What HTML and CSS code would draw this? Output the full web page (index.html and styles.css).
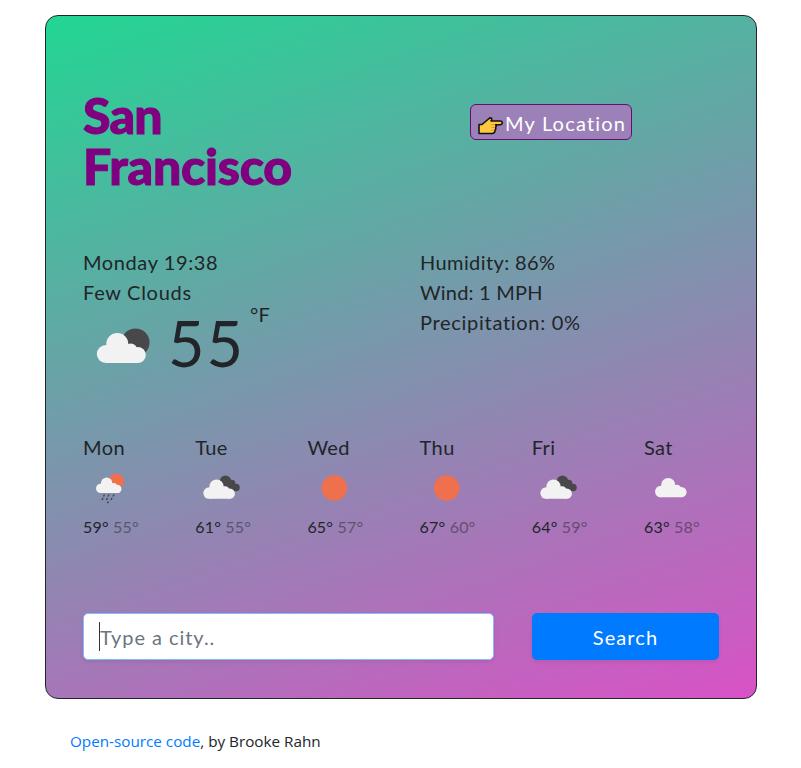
FILE: index.html
```html
<!DOCTYPE html>
<html lang="en">
<head>
<meta charset="utf-8">
<title>Weather</title>
<link rel="stylesheet" href="styles.css">
</head>
<body>
<svg class="defs" width="0" height="0">
  <defs>
    <g id="cloud"><circle cx="9" cy="21" r="9"/><circle cx="20.500" cy="11" r="11"/><circle cx="34" cy="17" r="6.500"/><circle cx="41" cy="22" r="8"/><path d="M9 14L20 9L34 13L41 22V30H9Z"/></g>
    <g id="back"><circle cx="30.500" cy="19" r="5.600"/><circle cx="36.700" cy="21.500" r="3.700"/><circle cx="41" cy="25.500" r="3.800"/><path d="M26 20H37L43 29H35Z"/></g>
  </defs>
</svg>
<main class="card">
  <header class="top">
    <h1 class="city"><span class="san">San</span><br>Francisco</h1>
    <button class="location" type="button">
      <svg width="26" height="20" viewBox="0 0 26 20"><path d="M1 9.500H4L10.500 4Q12.500 2.300 13.500 3.300Q14.300 4.500 13 6H22.500Q24.300 6.200 24.300 7.800Q24.300 9.400 22.500 9.700H17.500Q19 11 17.500 12.500Q18.500 14 17 15.200Q17.300 18 14.500 18.500H1Z" fill="#ffc83d" stroke="#111" stroke-width="1.600" stroke-linejoin="round"/><path d="M13 9.700H17M13.500 12.500H17M13 15.300H16.500" stroke="#e59a20" stroke-width="1" fill="none"/></svg><span>My Location</span>
    </button>
  </header>
  <section class="now">
    <div>
      <div class="line l-day">Monday 19:38</div>
      <div class="line l-few">Few Clouds</div>
      <div class="temp">
        <svg class="now-icon" width="55" height="37" viewBox="0 0 55 37"><circle cx="40.500" cy="14.500" r="14" fill="#48484a"/><use href="#cloud" transform="translate(1.800 5)" fill="#f2f2f2"/></svg>
        <span class="degrees">55</span><span class="unit">°F</span>
      </div>
    </div>
    <div>
      <div class="line">Humidity: 86%</div>
      <div class="line l-wind">Wind: 1 MPH</div>
      <div class="line l-rain">Precipitation: 0%</div>
    </div>
  </section>
  <section class="forecast">
    <div class="day"><div class="line">Mon</div>
      <svg width="56" height="50" viewBox="0 0 56 50"><circle cx="33.500" cy="19" r="7.500" fill="#ee704d"/><use href="#cloud" transform="translate(13 15.500) scale(.52)" fill="#f2f2f2"/><path d="M20.500 34.500l1-2M25 34.500l1-2M30 34.500l1-2M19 38l1-2M23.500 38l1-2M28 38l1-2M24.500 41l1-1.500" stroke="#48484a" stroke-width="1.500"/></svg>
      <div class="range">59° <span>55°</span></div></div>
    <div class="day"><div class="line">Tue</div>
      <svg width="56" height="50" viewBox="0 0 56 50"><use href="#back" fill="#48484a"/><use href="#cloud" transform="translate(8.300 17.500) scale(.645)" fill="#f2f2f2"/></svg>
      <div class="range">61° <span>55°</span></div></div>
    <div class="day"><div class="line">Wed</div>
      <svg width="56" height="50" viewBox="0 0 56 50"><circle cx="27.300" cy="26" r="12.800" fill="#ee704d"/></svg>
      <div class="range">65° <span>57°</span></div></div>
    <div class="day"><div class="line">Thu</div>
      <svg width="56" height="50" viewBox="0 0 56 50"><circle cx="26.600" cy="26" r="12.800" fill="#ee704d"/></svg>
      <div class="range">67° <span>60°</span></div></div>
    <div class="day"><div class="line">Fri</div>
      <svg width="56" height="50" viewBox="0 0 56 50"><use href="#back" fill="#48484a"/><use href="#cloud" transform="translate(8.300 17.500) scale(.645)" fill="#f2f2f2"/></svg>
      <div class="range">64° <span>59°</span></div></div>
    <div class="day"><div class="line">Sat</div>
      <svg width="56" height="50" viewBox="0 0 56 50"><use href="#cloud" transform="translate(11 16) scale(.645)" fill="#f2f2f2"/></svg>
      <div class="range">63° <span>58°</span></div></div>
  </section>
  <form class="search">
    <div class="field"><i class="caret"></i><span>Type a city..</span></div>
    <button class="submit" type="button">Search</button>
  </form>
</main>
<footer class="credit"><a>Open-source code</a>, by Brooke Rahn</footer>
</body>
</html>
```

FILE: styles.css
```css
* { box-sizing: border-box; }
body {
  margin: 0;
  padding: 15px 44px 0 45px;
  background: #fff;
  color: #212529;
  font-family: Lato, sans-serif;
  font-size: 20px;
  line-height: 30px;
}
svg { display: block; }
.defs { position: absolute; }
.card {
  height: 684px;
  padding: 74px 37px 0;
  border: 1px solid #212529;
  border-radius: 13px;
  background: linear-gradient(160deg, #22d693, #d952c6);
}
.top { display: flex; height: 157px; }
.city {
  width: 387px;
  margin: 0;
  color: purple;
  font-size: 50px;
  line-height: 51px;
  font-weight: 900;
  letter-spacing: -0.2px;
  -webkit-text-stroke: 1px purple;
}
.san { letter-spacing: -0.8px; }
.location {
  display: flex;
  align-items: center;
  width: 162px;
  height: 36px;
  margin-top: 14px;
  padding: 2px 0 0 7px;
  border: 1px solid #6b0a70;
  border-radius: 6px;
  background: #9b81b7;
  color: #fff;
  font: 20px/30px Lato, sans-serif;
  letter-spacing: 1.2px;
  white-space: nowrap;
}
.location svg { margin: 4px 1px 0 0; }
.location span { margin-top: -1px; }
.now {
  display: grid;
  grid-template-columns: 337px 1fr;
  height: 185px;
}
.line { letter-spacing: .4px; white-space: nowrap; }
.l-day { letter-spacing: .6px; }
.l-few { letter-spacing: .7px; }
.l-wind { letter-spacing: .2px; }
.l-rain { letter-spacing: .7px; }
.temp { display: flex; height: 70px; }
.now-icon { margin: 21px 0 0 12px; }
.degrees {
  margin-left: 18px;
  font-size: 63px;
  line-height: 71px;
  letter-spacing: 2px;
}
.unit { margin: -8px 0 0 5px; }
.forecast { display: grid; grid-template-columns: repeat(6, 112.200px); height: 181px; }
.range { font-size: 16px; line-height: 30px; letter-spacing: .2px; white-space: nowrap; }
.range span { opacity: .5; }
.search { display: flex; gap: 38px; margin: 0; }
.field {
  display: flex;
  align-items: center;
  width: 411px;
  height: 47px;
  padding: 1px 15px 0;
  border: 1px solid #80bdff;
  border-radius: 5px;
  background: #fff;
  box-shadow: 0 2px 4px rgba(0, 0, 0, .075);
  color: #6c757d;
  letter-spacing: .95px;
}
.caret { width: 1px; height: 29px; margin: -2px 0 0; background: #333; }
.submit {
  width: 187px;
  height: 47px;
  padding: 1px 0 0;
  border: 0;
  border-radius: 5px;
  background: #007bff;
  box-shadow: 0 2px 4px rgba(0, 0, 0, .075);
  color: #fff;
  font: 20px/30px Lato, sans-serif;
  letter-spacing: 1.1px;
}
.credit {
  margin: 30px 0 0 25px;
  font: 15.250px/24px "Open Sans", sans-serif;
}
.credit a { color: #007bff; }
```
